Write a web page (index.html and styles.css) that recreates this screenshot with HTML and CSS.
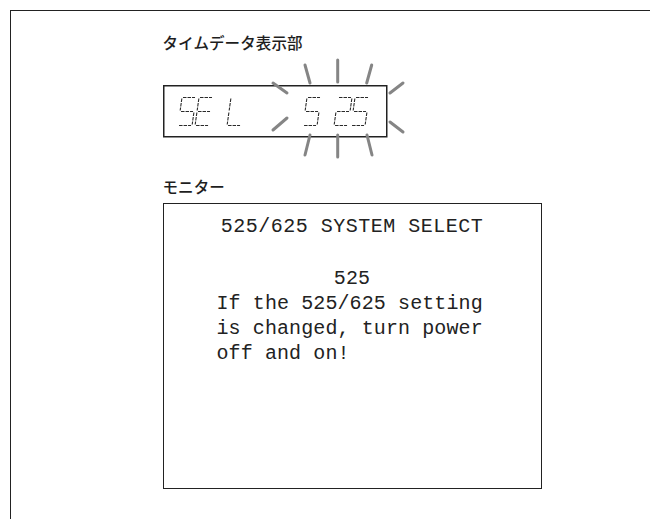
FILE: index.html
```html
<!DOCTYPE html>
<html lang="ja">
<head>
<meta charset="utf-8">
<link rel="stylesheet" href="styles.css">
</head>
<body>
<div class="frame">
  <div class="content">
    <div class="label label-lcd">タイムデータ表示部</div>
    <svg class="lcd" width="260" height="105" viewBox="160 55 260 105" xmlns="http://www.w3.org/2000/svg">
      <rect x="163.75" y="85.75" width="223" height="51" fill="#fff" stroke="#222" stroke-width="1.5"/>
      <g fill="none" stroke="#2a2a2a" stroke-width="1.1" stroke-dasharray="3.5 1">
        <!-- S -->
        <g transform="translate(182 97.5) skewX(-8)">
          <path d="M1 0H13M0 1V13M1 14H13M14 15V27M1 28H13"/>
        </g>
        <!-- E -->
        <g transform="translate(199 97.5) skewX(-8)">
          <path d="M1 0H13M0 1V13M1 14H13M0 15V27M1 28H13"/>
        </g>
        <!-- L -->
        <g transform="translate(231 97.5) skewX(-8)">
          <path d="M0 1V13M0 15V27M1 28H13"/>
        </g>
        <!-- 5 -->
        <g transform="translate(307 97.5) skewX(-8)">
          <path d="M1 0H13M0 1V13M1 14H13M14 15V27M1 28H13"/>
        </g>
        <!-- 2 -->
        <g transform="translate(338 97.5) skewX(-8)">
          <path d="M1 0H13M14 1V13M1 14H13M0 15V27M1 28H13"/>
        </g>
        <!-- 5 -->
        <g transform="translate(355 97.5) skewX(-8)">
          <path d="M1 0H13M0 1V13M1 14H13M14 15V27M1 28H13"/>
        </g>
      </g>
      <g stroke="#858585" stroke-width="3" stroke-linecap="round">
        <line x1="305" y1="65" x2="310" y2="83"/>
        <line x1="337.7" y1="60" x2="337.7" y2="82"/>
        <line x1="371.7" y1="65" x2="366.7" y2="83"/>
        <line x1="273" y1="83" x2="287" y2="93"/>
        <line x1="273" y1="130" x2="287" y2="118"/>
        <line x1="403" y1="83" x2="390" y2="93"/>
        <line x1="403" y1="132" x2="390" y2="122"/>
        <line x1="310" y1="135" x2="305" y2="155"/>
        <line x1="337.7" y1="135" x2="337.7" y2="157"/>
        <line x1="367" y1="135" x2="372" y2="155"/>
      </g>
    </svg>
    <div class="label label-monitor">モニター</div>
    <div class="monitor">
      <div class="osd-line osd-center osd-title">525/625 SYSTEM SELECT</div>
      <div class="osd-line">&nbsp;</div>
      <div class="osd-line osd-center">525</div>
      <div class="osd-line">If the 525/625 setting</div>
      <div class="osd-line">is changed, turn power</div>
      <div class="osd-line">off and on!</div>
    </div>
  </div>
</div>
</body>
</html>
```

FILE: styles.css
```css
html, body {
  margin: 0;
  padding: 0;
  background: #fff;
  overflow: hidden;
}

.frame {
  margin: 10px 0 0 10px;
  border-top: 1.5px solid #222;
  border-left: 1.5px solid #222;
  height: 509px;
  box-sizing: border-box;
}

.content {
  padding: 20px 0 0 151.5px;
  display: flex;
  flex-direction: column;
  align-items: flex-start;
}

.label {
  font-family: "Noto Sans CJK JP", "Noto Sans", sans-serif;
  font-size: 15.5px;
  font-weight: 500;
  color: #1e1e1e;
  line-height: 22px;
  letter-spacing: 0.1px;
}

.lcd {
  display: block;
  margin: 2px 0 0 -3px;
}

.label-monitor {
  margin-top: 15px;
}

.monitor {
  margin-top: 6px;
  width: 379px;
  height: 286px;
  box-sizing: border-box;
  border: 1.5px solid #222;
  padding: 10px 0 0 53px;
  font-family: "Liberation Mono", "DejaVu Sans Mono", monospace;
  font-size: 20px;
  color: #222;
}

.osd-line {
  line-height: 25px;
  white-space: pre;
  letter-spacing: 0.1px;
}

.osd-center {
  margin-left: -53px;
  text-align: center;
}

.osd-title {
  letter-spacing: 0.5px;
  margin-bottom: 2px;
}
```
